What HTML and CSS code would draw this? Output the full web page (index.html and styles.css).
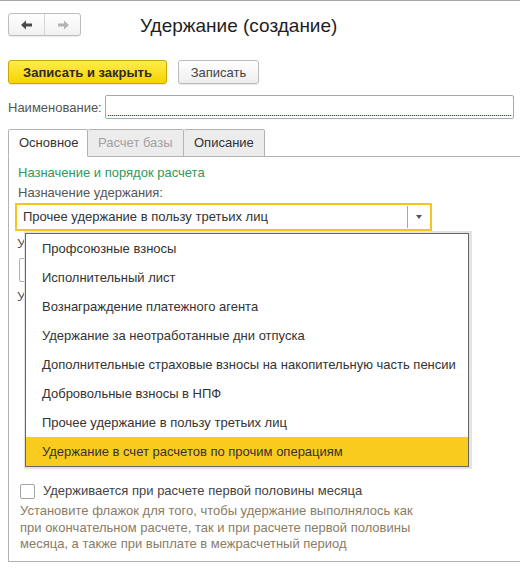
FILE: index.html
```html
<!DOCTYPE html>
<html lang="ru">
<head>
<meta charset="utf-8">
<title>Удержание (создание)</title>
<link rel="stylesheet" href="styles.css">
</head>
<body>
<div class="window">
  <div class="head">
    <div class="nav">
      <span class="nav-btn">
        <svg width="12" height="10" viewBox="0 0 12 10"><path d="M0 5 L5 0.5 L5 3.5 L11 3.5 L11 6.5 L5 6.5 L5 9.5 Z" fill="#4a4a4a"/></svg>
      </span>
      <span class="nav-btn">
        <svg width="12" height="10" viewBox="0 0 12 10"><path d="M12 5 L7 0.5 L7 3.5 L1 3.5 L1 6.5 L7 6.5 L7 9.5 Z" fill="#b4b4b4"/></svg>
      </span>
    </div>
    <h1 class="title">Удержание (создание)</h1>
  </div>

  <div class="toolbar">
    <button class="btn btn-primary">Записать и закрыть</button>
    <button class="btn">Записать</button>
  </div>

  <div class="name-row">
    <span class="label">Наименование:</span>
    <div class="name-input"></div>
  </div>

  <div class="tabs">
    <div class="tab tab-active">Основное</div>
    <div class="tab tab-disabled">Расчет базы</div>
    <div class="tab">Описание</div>
  </div>

  <div class="panel">
    <div class="group-title">Назначение и порядок расчета</div>
    <div class="field-label">Назначение удержания:</div>
    <div class="select">
      <span class="select-text">Прочее удержание в пользу третьих лиц</span>
      <span class="select-btn"><span class="tri"></span></span>
    </div>
    <div class="hidden-label">У</div>
    <div class="hidden-input"></div>
    <div class="hidden-label second">У</div>

    <label class="check-row">
      <span class="checkbox"></span>
      <span>Удерживается при расчете первой половины месяца</span>
    </label>
    <div class="help">Установите флажок для того, чтобы удержание выполнялось как при окончательном расчете, так и при расчете первой половины месяца, а также при выплате в межрасчетный период</div>

    <ul class="dropdown">
      <li>Профсоюзные взносы</li>
      <li>Исполнительный лист</li>
      <li>Вознаграждение платежного агента</li>
      <li>Удержание за неотработанные дни отпуска</li>
      <li>Дополнительные страховые взносы на накопительную часть пенсии</li>
      <li>Добровольные взносы в НПФ</li>
      <li>Прочее удержание в пользу третьих лиц</li>
      <li class="selected">Удержание в счет расчетов по прочим операциям</li>
    </ul>
  </div>
</div>
</body>
</html>
```

FILE: styles.css
```css
* { box-sizing: border-box; }

html, body {
  margin: 0;
  padding: 0;
  background: #fff;
}

body {
  font-family: "Liberation Sans", Arial, sans-serif;
  font-size: 13px;
  color: #333;
  width: 520px;
  height: 571px;
  overflow: hidden;
}

.window {
  border-top: 1px solid #a9a9a9;
  padding: 12px 0 0 8px;
}

/* header */
.head {
  display: flex;
  align-items: center;
  height: 23px;
}

.nav {
  display: flex;
  width: 73px;
  height: 23px;
  border: 1px solid #bdbdbd;
  border-radius: 3px;
  background: linear-gradient(#ffffff, #f1f1f1);
  box-shadow: 0 1px 1px rgba(0,0,0,0.08);
}

.nav-btn {
  flex: 1;
  display: flex;
  align-items: center;
  justify-content: center;
}

.nav-btn + .nav-btn {
  border-left: 1px solid #d6d6d6;
}

.title {
  margin: 2px 0 0 59px;
  font-size: 19px;
  font-weight: normal;
  color: #1e1e1e;
  line-height: 23px;
}

/* toolbar */
.toolbar {
  display: flex;
  margin-top: 24px;
  gap: 11px;
}

.btn {
  height: 24px;
  padding: 0;
  width: 81px;
  font-family: inherit;
  font-size: 13px;
  color: #444;
  border: 1px solid #bcbcbc;
  border-radius: 3px;
  background: linear-gradient(#ffffff, #eeeeee);
  box-shadow: 0 1px 1px rgba(0,0,0,0.1);
}

.btn-primary {
  width: 159px;
  font-weight: bold;
  color: #2b2b2b;
  border-color: #c9a800;
  background: linear-gradient(#ffec4a, #f6d400);
}

/* name */
.name-row {
  display: flex;
  align-items: center;
  margin-top: 11px;
  padding-right: 6px;
}

.label {
  color: #555;
  width: 97px;
}

.name-input {
  flex: 1;
  height: 24px;
  border: 1px solid #a8a8a8;
  border-radius: 2px;
  background: repeating-linear-gradient(to right, #e00000 0 1px, transparent 1px 2px) no-repeat left 2px bottom 2px / calc(100% - 4px) 1px;
}

/* tabs */
.tabs {
  display: flex;
  margin-top: 10px;
  border-bottom: 1px solid #b3b3b3;
}

.tab {
  height: 28px;
  margin-bottom: -1px;
  padding: 0 10px;
  line-height: 26px;
  border: 1px solid #b3b3b3;
  border-left: none;
  border-radius: 2px 2px 0 0;
  background: #ececec;
  color: #333;
}

.tab-active {
  width: 80px;
  border-left: 1px solid #b3b3b3;
  border-bottom-color: #fff;
  background: #fff;
}

.tab-disabled {
  width: 96px;
  color: #a2a2a2;
}

/* panel */
.panel {
  position: relative;
  border-left: 1px solid #b3b3b3;
  border-bottom: 1px solid #b3b3b3;
  padding: 8px 0 8px 9px;
  line-height: 16px;
}

.group-title {
  color: #2e9a58;
}

.field-label {
  margin-top: 4px;
  color: #555;
}

.select {
  display: flex;
  align-items: center;
  margin: 2px 0 0 -3px;
  width: 417px;
  height: 28px;
  border: 2px solid #f7c51a;
  background: #fff;
}

.select-text {
  flex: 1;
  padding-left: 6px;
  color: #333;
}

.select-btn {
  width: 23px;
  height: 22px;
  border-left: 1px solid #a8a8a8;
  display: flex;
  align-items: center;
  justify-content: center;
}

.tri {
  width: 0;
  height: 0;
  border-left: 3.5px solid transparent;
  border-right: 3.5px solid transparent;
  border-top: 4px solid #555;
}

/* fields behind the open dropdown: only their left edge shows */
.hidden-label {
  margin-top: 5px;
  margin-left: -1px;
  color: #555;
}

.hidden-label.second {
  margin-top: 7px;
}

.hidden-input {
  margin: 6px 0 0 1px;
  width: 200px;
  height: 24px;
  border: 1px solid #b0b0b0;
  border-radius: 2px;
}

.check-row {
  display: flex;
  align-items: center;
  gap: 8px;
  margin: 178px 0 0 2px;
  color: #444;
}

.checkbox {
  width: 15px;
  height: 15px;
  border: 1px solid #a3a3a3;
  border-radius: 2px;
  background: #fff;
}

.help {
  margin: 4px 0 0 2px;
  width: 395px;
  line-height: 16.5px;
  color: #8a7c66;
}

/* dropdown overlay */
.dropdown {
  position: absolute;
  left: 16px;
  top: 76px;
  width: 444px;
  margin: 0;
  padding: 0;
  list-style: none;
  border: 1px solid #666;
  background: #fff;
  box-shadow: 1px 0 0 2px #e3e3e3;
}

.dropdown li {
  height: 29px;
  line-height: 29px;
  padding-left: 16px;
  color: #333;
  white-space: nowrap;
}

.dropdown li.selected {
  background: #f9cb1f;
}
```
